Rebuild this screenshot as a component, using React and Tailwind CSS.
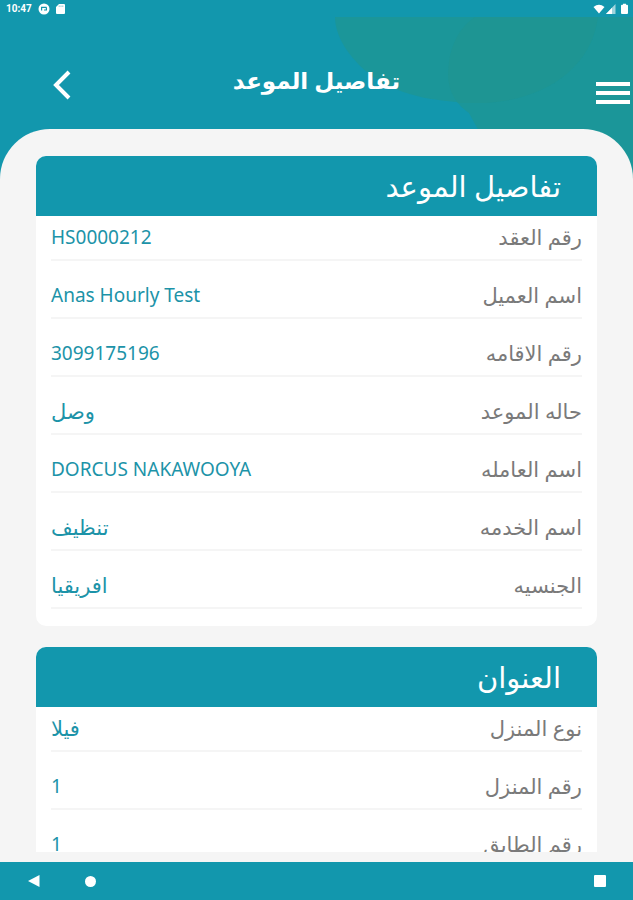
import React from 'react';
import clsx from 'clsx';

const appointment = [
  { label: 'رقم العقد', value: 'HS0000212', latin: true },
  { label: 'اسم العميل', value: 'Anas Hourly Test', latin: true },
  { label: 'رقم الاقامه', value: '3099175196', latin: true },
  { label: 'حاله الموعد', value: 'وصل' },
  { label: 'اسم العامله', value: 'DORCUS NAKAWOOYA', latin: true },
  { label: 'اسم الخدمه', value: 'تنظيف' },
  { label: 'الجنسيه', value: 'افريقيا' },
];

const address = [
  { label: 'نوع المنزل', value: 'فيلا' },
  { label: 'رقم المنزل', value: '1', latin: true },
  { label: 'رقم الطابق', value: '1', latin: true },
];

const StatusBar = () => (
  <div dir="ltr" className="flex h-[18px] shrink-0 items-center justify-between pl-[6px] pr-[5px] text-white">
    <div className="flex items-center">
      <span className="font-['Roboto',sans-serif] text-[10px] font-bold leading-none">10:47</span>
      <svg className="ml-[6px] h-3 w-3" viewBox="0 0 12 12">
        <circle cx="6" cy="6" r="5.5" fill="#fff" />
        <path d="M3.6 7.6V4.4H8.6M6 7H8.4V4.4" fill="none" stroke="#1297ad" strokeWidth="1.2" />
      </svg>
      <svg className="ml-1 h-3 w-3" viewBox="0 0 12 12">
        <path d="M5 1h5a1 1 0 0 1 1 1v8a1 1 0 0 1-1 1H3a1 1 0 0 1-1-1V4z" fill="#fff" />
        <path d="M5.2 2.6v1.2M7 2.6v1.2M8.8 2.6v1.2" stroke="#1297ad" strokeWidth=".6" />
      </svg>
    </div>
    <div className="flex items-center gap-px">
      <svg className="h-3 w-3" viewBox="0 0 12 12">
        <path d="M0.5 4Q6-.6 11.5 4L6 10.6z" fill="#fff" />
      </svg>
      <svg className="h-3 w-[10px]" viewBox="0 0 10 12">
        <path d="M9.5 1v10H0z" fill="#fff" opacity=".6" />
        <path d="M6 4.7V11H0z" fill="#fff" />
      </svg>
      <svg className="ml-1 h-3 w-[7px]" viewBox="0 0 7 12">
        <path d="M2 .8h3v1h1a1 1 0 0 1 1 1V10a1 1 0 0 1-1 1H1a1 1 0 0 1-1-1V2.8a1 1 0 0 1 1-1h1z" fill="#fff" />
      </svg>
    </div>
  </div>
);

const Card = ({ title, rows }) => (
  <section className="overflow-hidden rounded-[10px] bg-white pb-[17px]">
    <h2 className="flex h-[60px] items-center bg-[#1297ad] px-9 text-[29px] text-white">{title}</h2>
    <dl className="-mt-[13px] px-[15px]">
      {rows.map((row) => (
        <div key={row.label} className="flex h-[58px] items-end justify-between border-b-2 border-[#f5f5f5] pb-2">
          <dt className="text-[21px] leading-7 text-[#7a7a7a]">{row.label}</dt>
          <dd className={clsx('leading-7 text-[#1c93a8]', row.latin ? 'text-[19px]' : 'text-[21px]')}>{row.value}</dd>
        </div>
      ))}
    </dl>
  </section>
);

const App = () => {
  return (
    <div
      dir="rtl"
      lang="ar"
      className="relative flex h-screen flex-col overflow-hidden bg-[#1297ad] font-['Noto_Sans','DejaVu_Sans',sans-serif]"
    >
      {/* background shapes behind the header */}
      <svg className="absolute right-0 top-[17px] h-[183px] w-[300px]" viewBox="0 0 300 183">
        <path d="M142 0C122 14 115 35 115 60C118 82 128 90 136 96C144 112 158 132 190 183H300V0z" fill="#1b9699" />
        <path d="M2 0C2 22 20 45 40 60C70 80 105 85 145 86C205 86 258 55 265 0z" fill="#1b9699" />
        <path d="M142 0C122 14 115 35 115 60C116 72 120 80 125 86H145C205 86 258 55 265 0z" fill="#1e9593" />
      </svg>

      <div className="relative flex min-h-0 flex-1 flex-col">
        <StatusBar />

        <header className="grid h-[111px] shrink-0 grid-cols-[1fr_auto_1fr] items-center pt-[22px]">
          <button type="button" aria-label="القائمة" className="mt-4 justify-self-start pr-[3px]">
            <svg className="h-6 w-[34px]" viewBox="0 0 34 24">
              <path d="M0 3h34M0 12h34M0 21h34" stroke="#fff" strokeWidth="4" />
            </svg>
          </button>
          <h1 className="pb-2 text-[23px] font-bold text-white">تفاصيل الموعد</h1>
          <button type="button" aria-label="رجوع" className="justify-self-end pl-[53px]">
            <svg className="h-[30px] w-[18px]" viewBox="0 0 18 30">
              <path d="M16 2L3 15l13 13" fill="none" stroke="#fff" strokeWidth="4" />
            </svg>
          </button>
        </header>

        <main className="flex min-h-0 flex-1 flex-col rounded-t-[50px] bg-[#f5f5f5] px-9 pb-[10px] pt-[27px]">
          <div className="flex min-h-0 flex-1 flex-col gap-[21px] overflow-hidden *:shrink-0">
            <Card title="تفاصيل الموعد" rows={appointment} />
            <Card title="العنوان" rows={address} />
          </div>
        </main>

        <nav dir="ltr" className="flex h-[38px] shrink-0 items-center bg-[#1297ad] pl-7 pr-[27px]">
          <button type="button" aria-label="Back">
            <svg className="h-3 w-3" viewBox="0 0 12 12">
              <path d="M11.5 0v12L0 6z" fill="#fff" />
            </svg>
          </button>
          <button type="button" aria-label="Home" className="ml-[45px] h-[11px] w-[11px] rounded-full bg-white" />
          <button type="button" aria-label="Recent apps" className="ml-auto h-3 w-3 rounded-[1px] bg-white" />
        </nav>
      </div>
    </div>
  );
};

export default App;
